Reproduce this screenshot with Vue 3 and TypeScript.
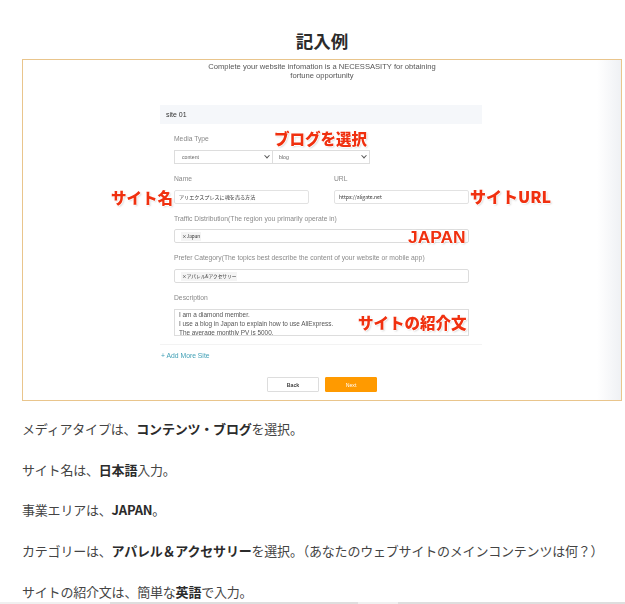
<script setup lang="ts">
interface Note { text: string; cls: string }
const notes: Note[] = [
  { text: 'ブログを選択', cls: 'n-blog' },
  { text: 'サイト名', cls: 'n-name' },
  { text: 'サイトURL', cls: 'n-url' },
  { text: 'JAPAN', cls: 'n-japan' },
  { text: 'サイトの紹介文', cls: 'n-desc' },
]
const lines = [
  ['メディアタイプは、', 'コンテンツ・ブログ', 'を選択。'],
  ['サイト名は、', '日本語', '入力。'],
  ['事業エリアは、', 'JAPAN', '。'],
  ['カテゴリーは、', 'アパレル＆アクセサリー', 'を選択。（あなたのウェブサイトのメインコンテンツは何？）'],
  ['サイトの紹介文は、簡単な', '英語', 'で入力。'],
]
</script>

<template>
  <main class="page">
    <h2 class="title">記入例</h2>
    <figure class="shot">
      <div class="shade"></div>
      <div class="blurred">
        <p class="intro">Complete your website infomation is a NECESSASITY for obtaining<br />fortune opportunity</p>
        <section class="panel">
          <div class="site-bar">site 01</div>
          <div class="fields">
            <label class="lbl">Media Type</label>
            <div class="selects">
              <div class="sel"><span>content</span><i class="chev"></i></div>
              <div class="sel sel-r"><span>blog</span><i class="chev"></i></div>
            </div>
            <div class="two">
              <div>
                <label class="lbl">Name</label>
                <div class="inp">アリエクスプレスに魂を売る方法</div>
              </div>
              <div>
                <label class="lbl">URL</label>
                <div class="inp">https://aligate.net</div>
              </div>
            </div>
            <label class="lbl lbl-short">Traffic Distribution(The region you primarily operate in)</label>
            <div class="inp wide"><span class="tag">×Japan</span></div>
            <label class="lbl">Prefer Category(The topics best describe the content of your website or mobile app)</label>
            <div class="inp wide"><span class="tag">×アパレル&amp;アクセサリー</span></div>
            <label class="lbl">Description</label>
            <div class="area">I am a diamond member.<br />I use a blog in Japan to explain how to use AliExpress.<br />The average monthly PV is 5000.</div>
          </div>
          <div class="add">+ Add More Site</div>
          <div class="btns">
            <button class="btn">Back</button>
            <button class="btn next">Next</button>
          </div>
        </section>
      </div>
      <span v-for="n in notes" :key="n.cls" class="note" :class="n.cls">{{ n.text }}</span>
    </figure>
    <p v-for="(l, i) in lines" :key="i" class="line">{{ l[0] }}<strong>{{ l[1] }}</strong>{{ l[2] }}</p>
  </main>
  <div class="strip">
    <span class="seg s1"></span>
    <span class="seg s2"></span>
    <span class="seg s3"></span>
    <span class="seg s4"></span>
  </div>
</template>

<style>
html, body { margin: 0; background: #fff; overflow: hidden; }
</style>

<style scoped>
.page { padding: 0 3px 0 22px; height: 602px; box-sizing: border-box; overflow: hidden; color: #333; font-family: "Noto Sans CJK JP", "Noto Sans", sans-serif; }
.title { margin: 0; padding-top: 29px; height: 30px; box-sizing: content-box; text-align: center; font-size: 17.5px; line-height: 24px; font-weight: 700; color: #2b2b2b; }
.shot { position: relative; margin: 0; height: 342px; box-sizing: border-box; border: 1px solid #e9c58c; background: #fff; }
.shade { position: absolute; top: 0; right: 0; bottom: 0; width: 24px; background: linear-gradient(to right, rgba(240, 242, 245, 0), #eff1f4); }
.blurred { filter: blur(0.45px); font-family: "Liberation Sans", sans-serif; font-size: 7px; color: #555; }
.intro { margin: 0; padding-top: 2px; height: 43px; text-align: center; font-size: 7.6px; line-height: 9px; color: #555; }
.panel { width: 322px; margin-left: 137px; }
.site-bar { height: 19px; line-height: 19px; padding-left: 6px; background: #f5f7fa; font-size: 7px; color: #333; }
.fields { padding: 0 13px 0 14px; border-bottom: 1px solid #f3f3f3; height: 221px; box-sizing: border-box; }
.lbl { display: block; height: 26px; padding-top: 11px; box-sizing: border-box; line-height: 8px; font-size: 6.75px; color: #8a8a8a; }
.lbl-short { height: 25px; }
.selects { display: flex; width: 196px; }
.sel { flex: 1; display: flex; align-items: center; justify-content: space-between; height: 14px; box-sizing: border-box; border: 1px solid #ddd; padding: 0 3px 0 7px; font-size: 5.2px; color: #666; background: #fff; }
.sel-r { border-left: 0; padding-left: 6px; }
.chev { width: 3px; height: 3px; border-right: 1px solid #555; border-bottom: 1px solid #555; transform: rotate(45deg) translate(-1px, -1px); }
.two { display: grid; grid-template-columns: 135px 135px; column-gap: 25px; }
.inp { height: 14px; line-height: 12px; box-sizing: border-box; border: 1px solid #e2e2e2; border-radius: 2px; padding-left: 4px; font-size: 5.1px; color: #333; font-family: "Noto Sans CJK JP", sans-serif; background: #fff; }
.wide { width: 295px; display: flex; align-items: center; padding-left: 6px; border-color: #dcdcdc; }
.tag { background: #f4f4f4; padding: 0 1px; line-height: 9px; font-size: 4.7px; }
.area { width: 295px; height: 27px; overflow: hidden; box-sizing: border-box; border: 1px solid #ddd; padding: 0 4px; line-height: 9px; font-size: 6.4px; color: #555; }
.add { margin-top: 6px; padding-left: 1px; height: 26px; line-height: 10px; font-size: 6.8px; color: #3f9fb5; }
.btns { display: flex; gap: 6px; margin-left: 107px; }
.btn { width: 52px; height: 15px; padding: 0; box-sizing: border-box; border: 1px solid #ddd; border-radius: 1px; background: #fff; color: #444; font-family: "Liberation Sans", sans-serif; font-size: 5.2px; font-weight: 700; }
.next { background: #ff9a00; border-color: #ff9a00; color: #fff; font-weight: 400; }
.note { position: absolute; white-space: nowrap; font-family: "Noto Sans CJK JP", sans-serif; font-weight: 900; font-size: 15.5px; line-height: 20px; color: #f0300f; filter: blur(0.25px); text-shadow: 1px 0 1px #fff, -1px 0 1px #fff, 0 1px 1px #fff, 0 -1px 1px #fff, 1px 1px 2px rgba(0,0,0,.25); }
.n-blog { left: 251px; top: 68px; }
.n-name { left: 88px; top: 127px; }
.n-url { left: 447px; top: 126px; font-size: 16px; }
.n-japan { left: 385px; top: 167px; font-family: "Liberation Sans", sans-serif; font-weight: 700; font-size: 17.4px; }
.n-desc { left: 335px; top: 252px; }
.line { margin: 0; height: 40.7px; line-height: 40.7px; font-size: 13px; white-space: nowrap; letter-spacing: -0.2px; color: #444; }
.line strong { font-weight: 700; color: #2b2b2b; }
.line:first-of-type { margin-top: 8px; }
.strip { display: flex; height: 2px; }
.seg { display: block; }
.s1 { width: 110px; background: #f0f0f0; }
.s2 { width: 248px; background: #dedede; }
.s3 { width: 40px; background: #f0f0f0; }
.s4 { flex: 1; background: #dedede; }
</style>
